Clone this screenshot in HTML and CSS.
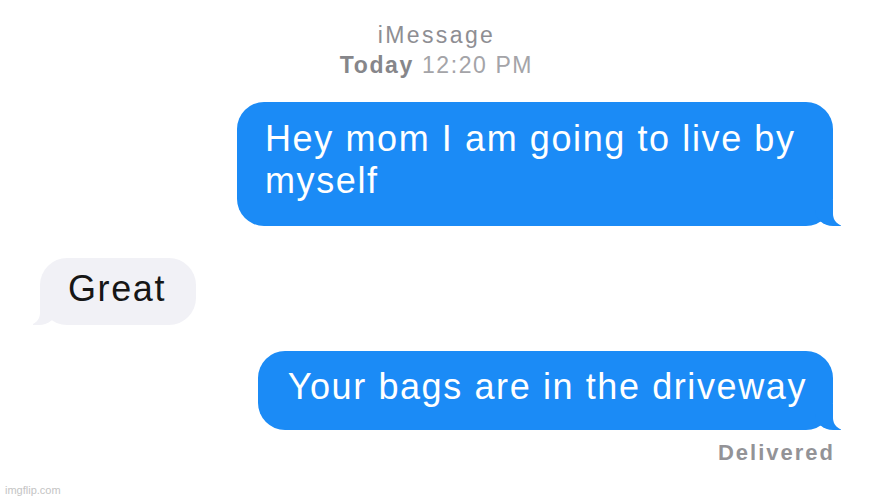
FILE: index.html
```html
<!DOCTYPE html>
<html lang="en">
<head>
  <meta charset="UTF-8" />
  <title>iMessage</title>
  <link rel="stylesheet" href="styles.css">
</head>
<body>
  <div class="thread">

    <!-- header -->
    <div class="meta">
      <div class="service">iMessage</div>
      <div class="stamp"><strong>Today</strong> 12:20 PM</div>
    </div>

    <div class="msg out first">Hey mom I am going to live by myself</div>
    <div class="msg in">Great</div>
    <div class="msg out last">Your bags are in the driveway</div>
    <div class="status">Delivered</div>
  </div>

  <div class="watermark">imgflip.com</div>
</body>
</html>
```

FILE: styles.css
```css
*{box-sizing:border-box}
body{
  margin:0;
  background:#fff;
  font-family:'Liberation Sans',Arial,sans-serif;
  width:889px;
  height:500px;
  overflow:hidden;
  position:relative;
}
.thread{
  display:flex;
  flex-direction:column;
  padding:20px 56px 0 40px;
}
.meta{
  text-align:center;
  font-size:23px;
  line-height:30px;
}
.service{color:#8e8e93;letter-spacing:2.4px}
.stamp{color:#a4a4a8;letter-spacing:1.6px}
.stamp strong{color:#86868a;font-weight:700}

.msg{
  position:relative;
  font-size:36px;
  line-height:42px;
  letter-spacing:1.6px;
  border-radius:27px;
}
.msg.out{
  align-self:flex-end;
  max-width:596px;
  background:#1b8bf6;
  color:#fff;
}
.msg.first{margin-top:22px;padding:16px 28px 24px}
.msg.last{margin-top:26px;padding:15px 26px 22px 30px}
.msg.in{
  align-self:flex-start;
  background:#f1f1f6;
  color:#161616;
  margin-top:32px;
  padding:10px 30px 15px 28px;
}

/* bubble tails */
.msg::before,.msg::after{
  content:"";
  position:absolute;
  bottom:0;
  height:26px;
}
.msg.out::before{
  right:-8px;
  width:26px;
  background:#1b8bf6;
  border-bottom-left-radius:18px 16px;
}
.msg.out::after{
  right:-26px;
  width:26px;
  background:#fff;
  border-bottom-left-radius:12px;
}
.msg.in::before{
  left:-7px;
  width:24px;
  background:#f1f1f6;
  border-bottom-right-radius:18px 16px;
}
.msg.in::after{
  left:-24px;
  width:24px;
  background:#fff;
  border-bottom-right-radius:12px;
}

.status{
  align-self:flex-end;
  margin:12px -2px 0 0;
  font-size:22px;
  line-height:22px;
  font-weight:700;
  color:#939397;
  letter-spacing:2px;
}
.watermark{
  position:absolute;
  left:5px;
  bottom:4px;
  font-size:11px;
  color:#c4c4c4;
}
```
